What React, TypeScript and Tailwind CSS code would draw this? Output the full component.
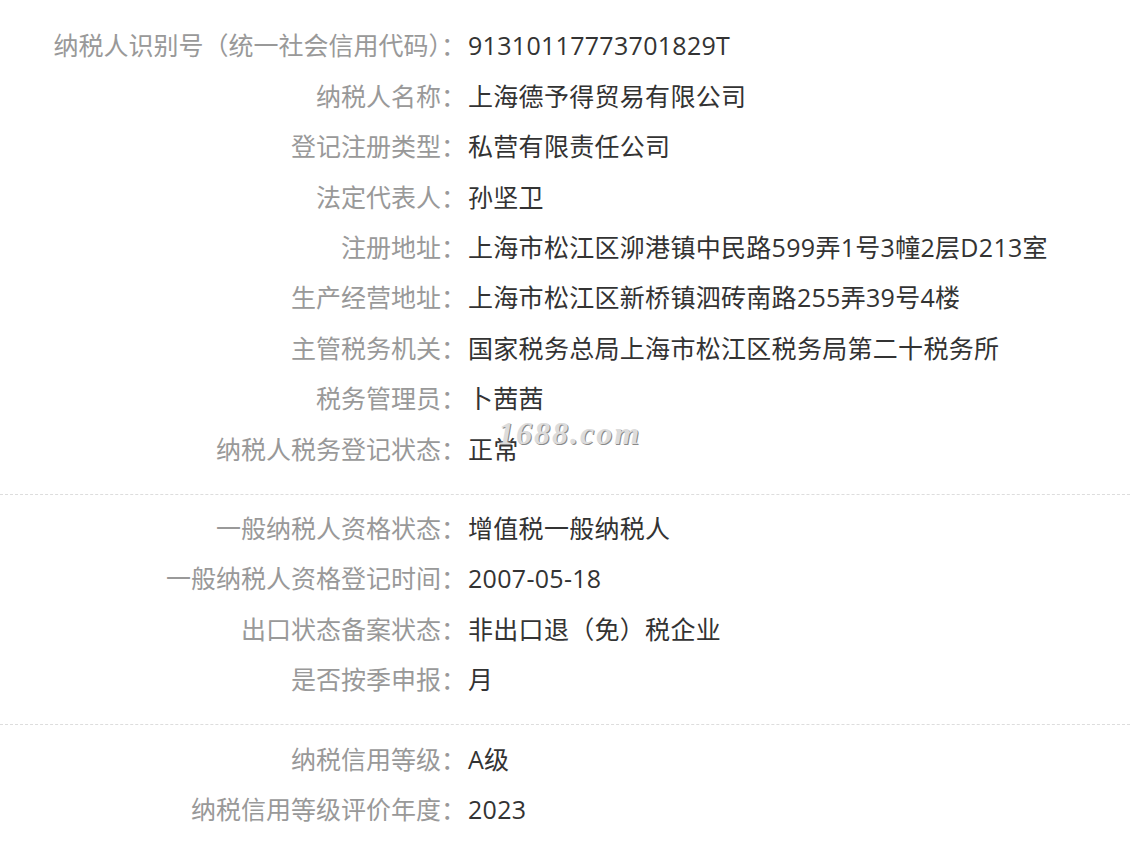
import React from 'react';

type Row = { label: string; value: string };

const sections: Row[][] = [
  [
    { label: '纳税人识别号（统一社会信用代码）', value: '91310117773701829T' },
    { label: '纳税人名称', value: '上海德予得贸易有限公司' },
    { label: '登记注册类型', value: '私营有限责任公司' },
    { label: '法定代表人', value: '孙坚卫' },
    { label: '注册地址', value: '上海市松江区泖港镇中民路599弄1号3幢2层D213室' },
    { label: '生产经营地址', value: '上海市松江区新桥镇泗砖南路255弄39号4楼' },
    { label: '主管税务机关', value: '国家税务总局上海市松江区税务局第二十税务所' },
    { label: '税务管理员', value: '卜茜茜' },
    { label: '纳税人税务登记状态', value: '正常' },
  ],
  [
    { label: '一般纳税人资格状态', value: '增值税一般纳税人' },
    { label: '一般纳税人资格登记时间', value: '2007-05-18' },
    { label: '出口状态备案状态', value: '非出口退（免）税企业' },
    { label: '是否按季申报', value: '月' },
  ],
  [
    { label: '纳税信用等级', value: 'A级' },
    { label: '纳税信用等级评价年度', value: '2023' },
  ],
];

export default function App() {
  return (
    <div className="relative w-[1130px] min-h-[857px] bg-white pt-3 font-['Open_Sans','Noto_Sans_CJK_SC',sans-serif] text-[25px]">
      {sections.map((rows, si) => (
        <div
          key={si}
          className={`pt-[9px] pb-[19px] ${si < sections.length - 1 ? 'border-b border-dashed border-[#dddddd]' : ''}`}
        >
          {rows.map((r) => (
            <div key={r.label} className="flex h-[50.4px] items-center">
              <div className="w-[466px] shrink-0 text-right text-[#999999]">{r.label}：</div>
              <div className="pl-[2px] tracking-[0.3px] text-[#333333]">{r.value}</div>
            </div>
          ))}
        </div>
      ))}
      <div className="pointer-events-none absolute left-[498px] top-[409px] select-none font-['Liberation_Serif',serif] text-[32px] font-bold italic tracking-[2px] text-[#dcdcdc] [text-shadow:1px_1px_0_#8a8a8a]">
        1688.com
      </div>
    </div>
  );
}
